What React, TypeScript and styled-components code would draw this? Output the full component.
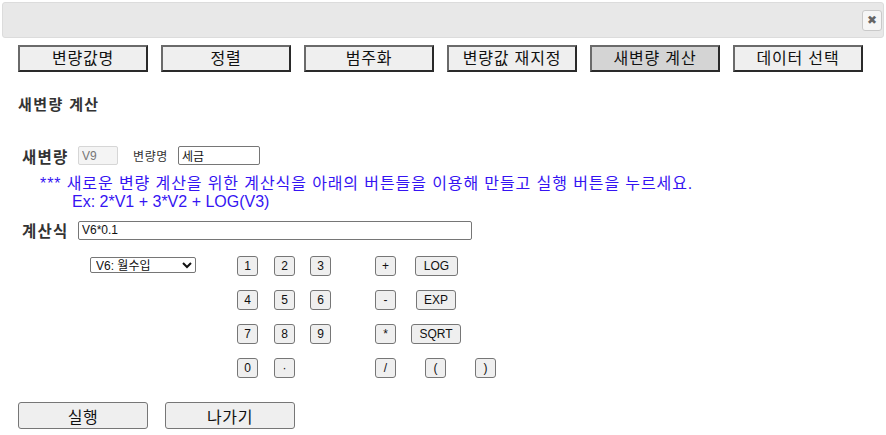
import React from "react";
import styled, { createGlobalStyle } from "styled-components";

const Global = createGlobalStyle`
  html, body { margin: 0; padding: 0; background: #fff; }
  body { font-family: "Liberation Sans", "Noto Sans CJK KR", sans-serif; color: #222; }
  * { box-sizing: border-box; }
`;

const Page = styled.div`
  width: 886px;
  height: 435px;
  padding: 2px 2px 0 2px;
  display: flex;
  flex-direction: column;
  overflow: hidden;
`;

const TitleBar = styled.div`
  height: 36px;
  background: #e8e8e8;
  border: 1px solid #dcdcdc;
  border-radius: 3px;
  display: flex;
  align-items: center;
  justify-content: flex-end;
  padding-right: 1px;
`;

const CloseBtn = styled.button`
  width: 20px;
  height: 21px;
  padding: 0;
  border: 1px solid #c9c9c9;
  border-radius: 3px;
  background: #f6f6f6;
  color: #666;
  font-size: 12px;
  line-height: 1;
  display: flex;
  align-items: center;
  justify-content: center;
  font-family: "DejaVu Sans", sans-serif;
`;

const Content = styled.div`
  padding: 0 16px;
  display: flex;
  flex-direction: column;
`;

const Tabs = styled.div`
  display: flex;
  gap: 13px;
  margin-top: 7px;
`;

const Tab = styled.button<{ $active?: boolean }>`
  width: 130px;
  height: 27px;
  padding: 0;
  border: 2px solid #555;
  border-top-color: #6a6a6a;
  border-left-color: #6a6a6a;
  border-right-color: #2a2a2a;
  border-bottom-color: #2a2a2a;
  background: ${(p) => (p.$active ? "#d4d4d4" : "#efefef")};
  font-family: "Liberation Sans", "Noto Sans CJK KR", sans-serif;
  font-size: 16px;
  letter-spacing: 0.8px;
  color: #111;
  line-height: 1;
`;

const Heading = styled.div`
  margin-top: 24px;
  font-size: 15px;
  letter-spacing: 1.4px;
  font-weight: bold;
  color: #333;
  height: 18px;
  line-height: 18px;
`;

const NewVarRow = styled.div`
  display: flex;
  align-items: center;
  margin-top: 32px;
  padding-left: 4px;
  height: 19px;
`;

const FieldLabel = styled.span`
  font-size: 15.5px;
  letter-spacing: 1.3px;
  font-weight: bold;
  color: #333;
  width: 56px;
`;

const SmallLabel = styled.span`
  font-size: 12px;
  letter-spacing: 0.6px;
  color: #333;
  margin: 0 10px 0 15px;
`;

const TextBox = styled.input<{ $w: number; $disabled?: boolean }>`
  width: ${(p) => p.$w}px;
  height: 19px;
  padding: 1px 3px;
  font-family: "Liberation Sans", "Noto Sans CJK KR", sans-serif;
  font-size: 12px;
  color: ${(p) => (p.$disabled ? "#777" : "#111")};
  background: ${(p) => (p.$disabled ? "#f4f4f4" : "#fff")};
  border: 1px solid ${(p) => (p.$disabled ? "#d6d6d6" : "#767676")};
  border-radius: 2px;
  outline: none;
`;

const Notice = styled.div`
  margin-top: 10px;
  padding-left: 22px;
  color: #3514f2;
  font-size: 16px;
  line-height: 18px;
`;

const NoticeMain = styled.div`
  letter-spacing: 0.9px;
`;

const NoticeSub = styled.div`
  padding-left: 32px;
`;

const FormulaRow = styled.div`
  display: flex;
  align-items: center;
  margin-top: 9px;
  padding-left: 4px;
  height: 20px;
`;

const Keypad = styled.div`
  display: grid;
  grid-template-columns: 72px 147px 37px 36px 65px 40px 60px 30px;
  grid-auto-rows: 34px;
  margin-top: 16px;
  align-items: start;
`;

const Select = styled.select`
  width: 106px;
  height: 16px;
  font-family: "Liberation Sans", "Noto Sans CJK KR", sans-serif;
  font-size: 12px;
  padding: 0 0 0 1px;
  border: 1px solid #767676;
  border-radius: 2px;
  background: #fff;
  color: #111;
  margin-top: 1px;
`;

const Key = styled.button<{ $w?: number; $shift?: number }>`
  width: ${(p) => p.$w ?? 21}px;
  height: 20px;
  padding: 0;
  margin-left: ${(p) => p.$shift ?? 0}px;
  border: 1px solid #767676;
  border-radius: 3px;
  background: #efefef;
  font-family: "Liberation Sans", "Noto Sans CJK KR", sans-serif;
  font-size: 12px;
  color: #111;
`;

const Cell = styled.div`
  display: flex;
  justify-content: flex-start;
`;

const Actions = styled.div`
  display: flex;
  gap: 17px;
  margin-top: 10px;
`;

const ActionBtn = styled.button`
  width: 130px;
  height: 27px;
  border: 1px solid #767676;
  border-radius: 3px;
  background: #efefef;
  font-family: "Liberation Sans", "Noto Sans CJK KR", sans-serif;
  font-size: 16px;
  letter-spacing: 0.6px;
  color: #111;
`;

const tabs = ["변량값명", "정렬", "범주화", "변량값 재지정", "새변량 계산", "데이터 선택"];

export default function App() {
  return (
    <>
      <Global />
      <Page>
        <TitleBar>
          <CloseBtn>✖</CloseBtn>
        </TitleBar>
        <Content>
          <Tabs>
            {tabs.map((t) => (
              <Tab key={t} $active={t === "새변량 계산"}>
                {t}
              </Tab>
            ))}
          </Tabs>
          <Heading>새변량 계산</Heading>
          <NewVarRow>
            <FieldLabel>새변량</FieldLabel>
            <TextBox $w={40} $disabled readOnly value="V9" />
            <SmallLabel>변량명</SmallLabel>
            <TextBox $w={82} readOnly value="세금" />
          </NewVarRow>
          <Notice>
            <NoticeMain>
              *** 새로운 변량 계산을 위한 계산식을 아래의 버튼들을 이용해 만들고 실행 버튼을 누르세요.
            </NoticeMain>
            <NoticeSub>Ex: 2*V1 + 3*V2 + LOG(V3)</NoticeSub>
          </Notice>
          <FormulaRow>
            <FieldLabel>계산식</FieldLabel>
            <TextBox $w={394} readOnly value="V6*0.1" />
          </FormulaRow>
          <Keypad>
            <Cell />
            <Cell>
              <Select defaultValue="V6">
                <option value="V6">V6: 월수입</option>
              </Select>
            </Cell>
            <Cell><Key>1</Key></Cell>
            <Cell><Key>2</Key></Cell>
            <Cell><Key>3</Key></Cell>
            <Cell><Key>+</Key></Cell>
            <Cell><Key $w={43}>LOG</Key></Cell>
            <Cell />

            <Cell />
            <Cell />
            <Cell><Key>4</Key></Cell>
            <Cell><Key>5</Key></Cell>
            <Cell><Key>6</Key></Cell>
            <Cell><Key>-</Key></Cell>
            <Cell><Key $w={40} $shift={1}>EXP</Key></Cell>
            <Cell />

            <Cell />
            <Cell />
            <Cell><Key>7</Key></Cell>
            <Cell><Key>8</Key></Cell>
            <Cell><Key>9</Key></Cell>
            <Cell><Key>*</Key></Cell>
            <Cell><Key $w={50} $shift={-4}>SQRT</Key></Cell>
            <Cell />

            <Cell />
            <Cell />
            <Cell><Key>0</Key></Cell>
            <Cell><Key>·</Key></Cell>
            <Cell />
            <Cell><Key>/</Key></Cell>
            <Cell><Key $shift={10}>(</Key></Cell>
            <Cell><Key>)</Key></Cell>
          </Keypad>
          <Actions>
            <ActionBtn>실행</ActionBtn>
            <ActionBtn>나가기</ActionBtn>
          </Actions>
        </Content>
      </Page>
    </>
  );
}
